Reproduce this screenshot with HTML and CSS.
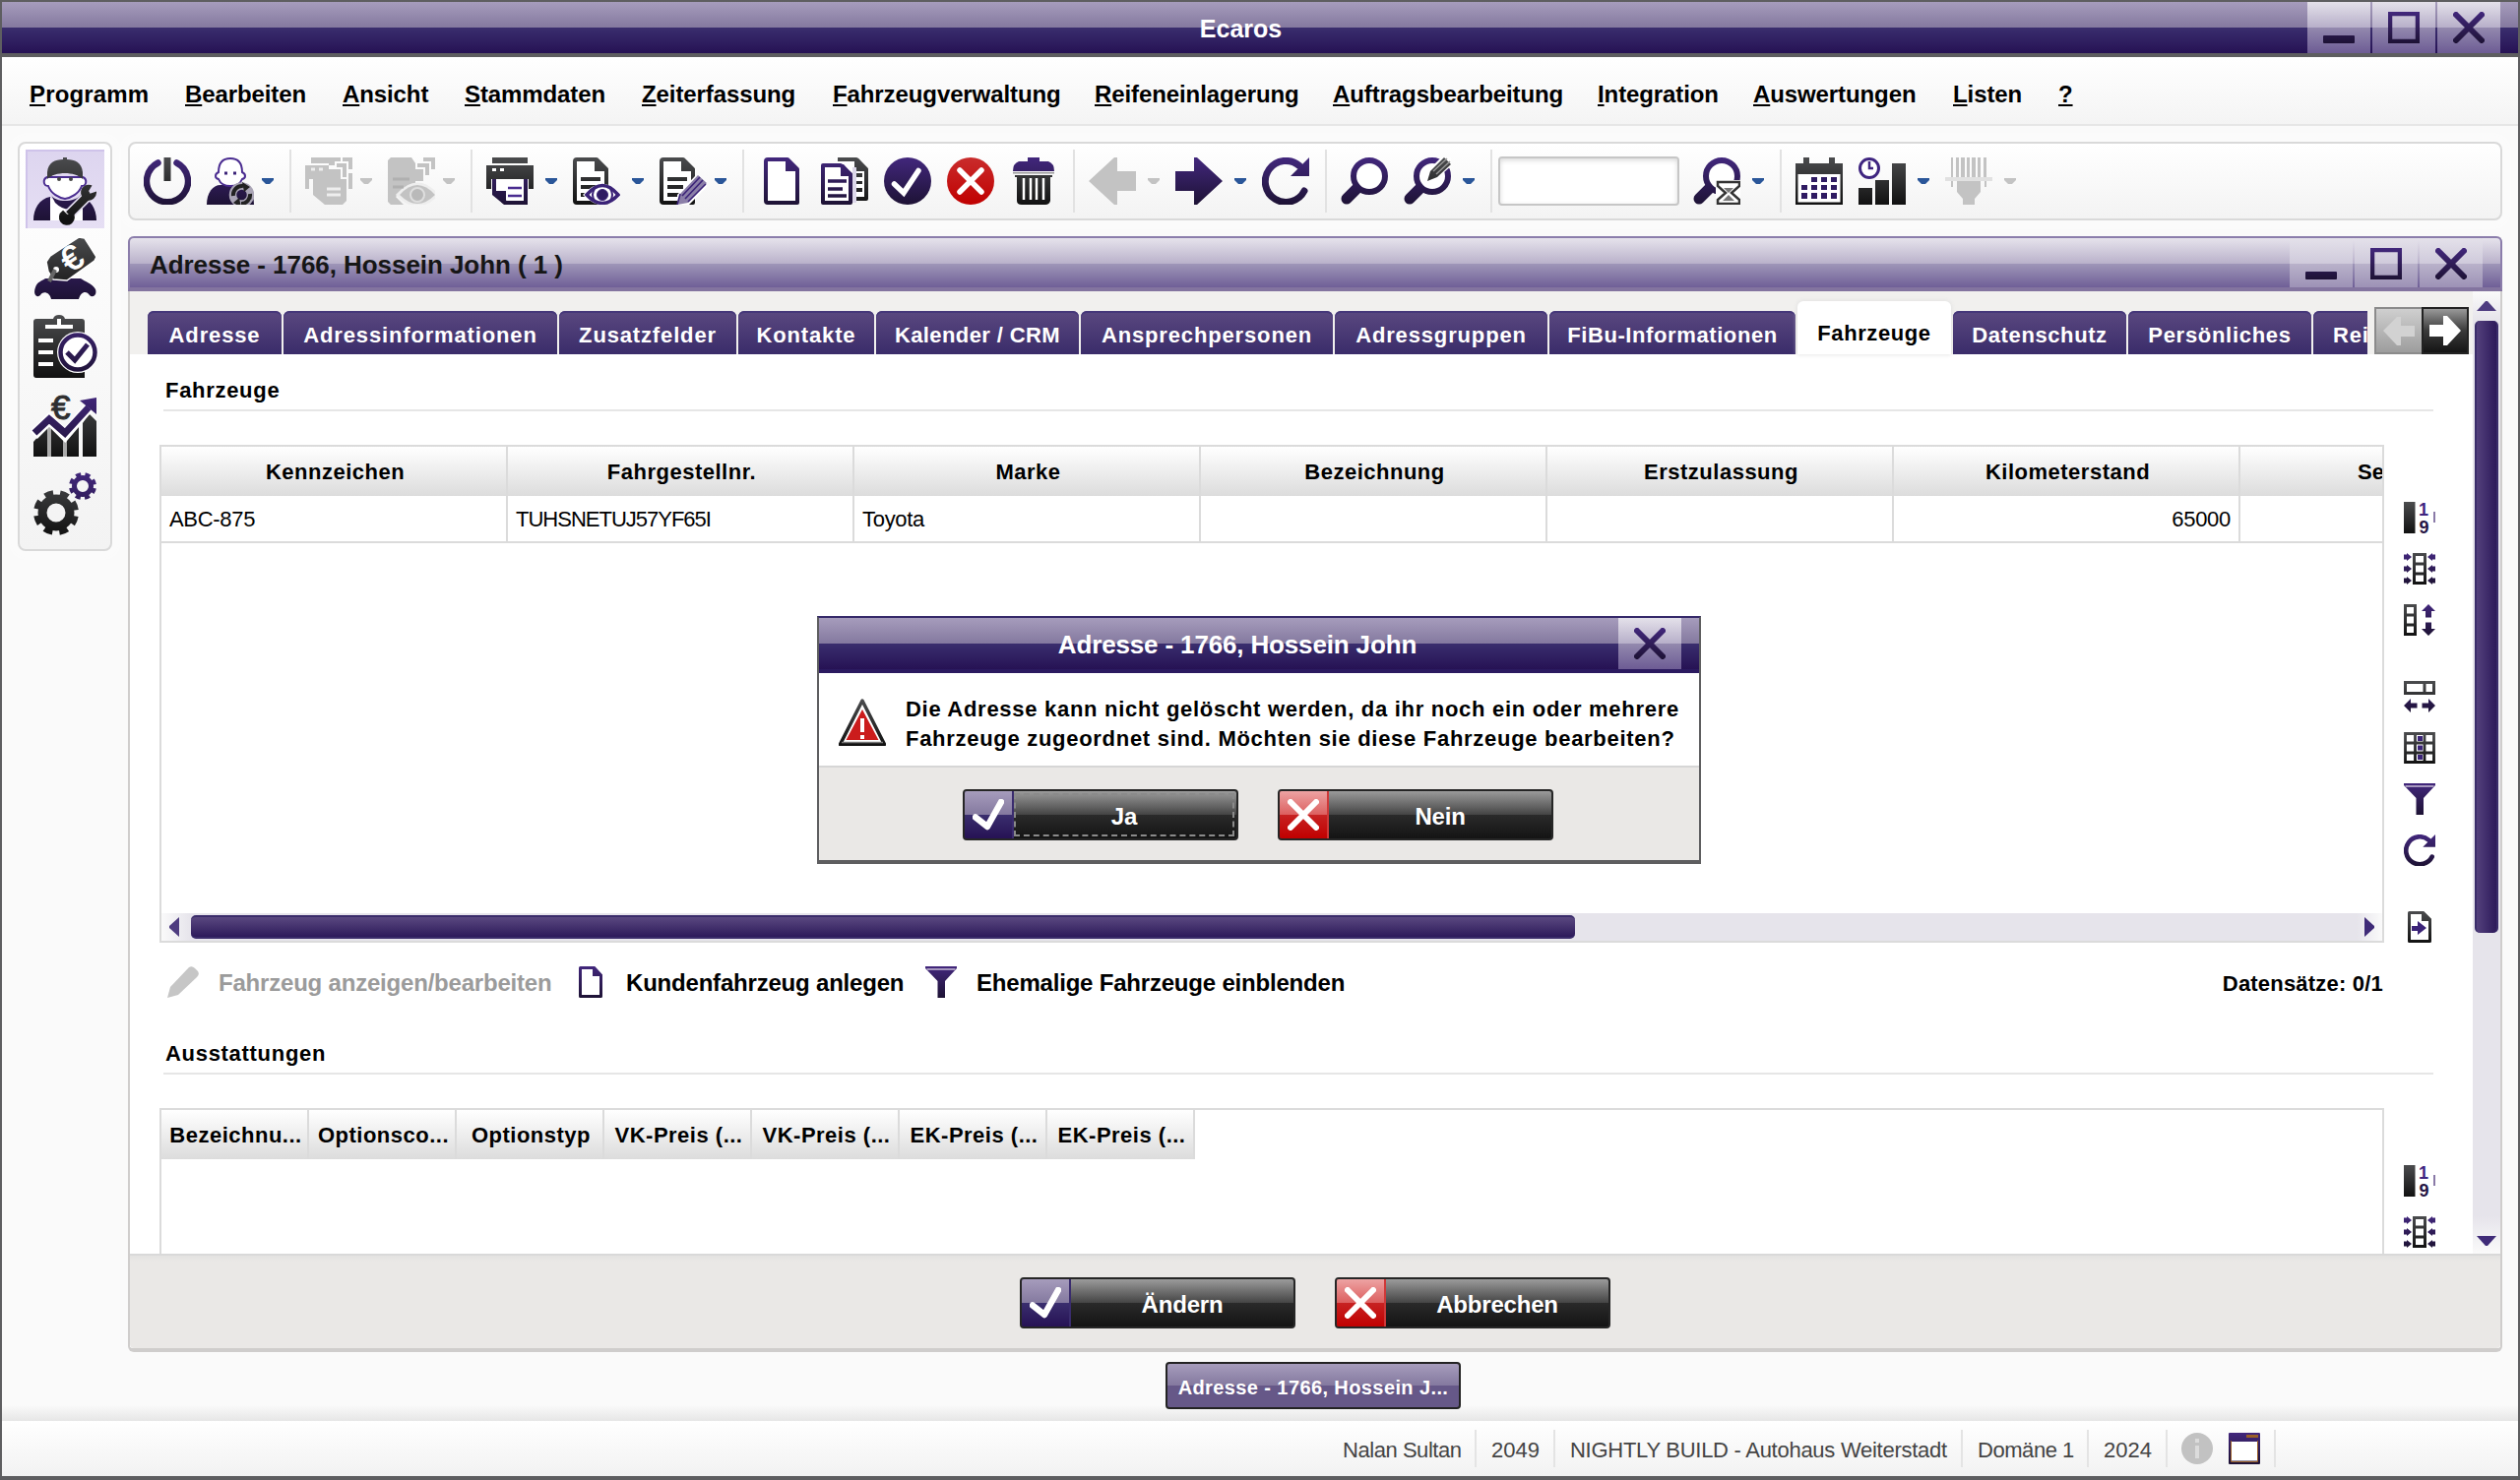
FILE: index.html
```html
<!DOCTYPE html>
<html lang="de">
<head>
<meta charset="utf-8">
<title>Ecaros</title>
<link rel="stylesheet" href="styles.css">
</head>
<body>
<svg class="defs" width="0" height="0">
  <defs>
    <linearGradient id="p48" gradientUnits="userSpaceOnUse" x1="0" y1="0" x2="0" y2="48"><stop offset="0" stop-color="#42277c"/><stop offset="1" stop-color="#1d1234"/></linearGradient>
    <linearGradient id="d48" gradientUnits="userSpaceOnUse" x1="0" y1="0" x2="0" y2="48"><stop offset="0" stop-color="#4b4c4e"/><stop offset="1" stop-color="#111"/></linearGradient>
    <linearGradient id="r48" gradientUnits="userSpaceOnUse" x1="0" y1="0" x2="0" y2="48"><stop offset="0" stop-color="#c92c2c"/><stop offset="1" stop-color="#c00000"/></linearGradient>
    <linearGradient id="p64" gradientUnits="userSpaceOnUse" x1="0" y1="0" x2="0" y2="64"><stop offset="0" stop-color="#42277c"/><stop offset="1" stop-color="#1d1234"/></linearGradient>
    <linearGradient id="d64" gradientUnits="userSpaceOnUse" x1="0" y1="0" x2="0" y2="64"><stop offset="0" stop-color="#4b4c4e"/><stop offset="1" stop-color="#111"/></linearGradient>
    <linearGradient id="p32" gradientUnits="userSpaceOnUse" x1="0" y1="0" x2="0" y2="32"><stop offset="0" stop-color="#42277c"/><stop offset="1" stop-color="#1d1234"/></linearGradient>
    <linearGradient id="d32" gradientUnits="userSpaceOnUse" x1="0" y1="0" x2="0" y2="32"><stop offset="0" stop-color="#4b4c4e"/><stop offset="1" stop-color="#111"/></linearGradient>
    <symbol id="i-min" viewBox="0 0 32 32"><rect x="0" y="24" width="32" height="8" rx="1" fill="url(#p32)"/></symbol>
    <symbol id="i-max" viewBox="0 0 32 32"><rect x="2" y="2" width="28" height="28" fill="none" stroke="url(#p32)" stroke-width="4.5"/></symbol>
    <symbol id="i-close" viewBox="0 0 32 32"><path d="M3 3 29 29M29 3 3 29" stroke="url(#p32)" stroke-width="6" stroke-linecap="round"/></symbol>
    <symbol id="i-check" viewBox="0 0 32 32"><path d="M3 18.500 15 28 29 3" fill="none" stroke="#fff" stroke-width="6.500" stroke-linecap="round" stroke-linejoin="round"/></symbol>
    <symbol id="i-x" viewBox="0 0 32 32"><path d="M3 3 29 29M29 3 3 29" stroke="#fff" stroke-width="6" stroke-linecap="round"/></symbol>
    <symbol id="i-drop" viewBox="0 0 12 6"><path d="M0 0H12V2L8 6H4L0 2Z" fill="currentColor"/></symbol>
    <symbol id="i-search" viewBox="0 0 48 48"><path d="M21 27 6 42" stroke="url(#p48)" stroke-width="11" stroke-linecap="round"/><circle cx="29" cy="19" r="16" fill="#fff" stroke="url(#p48)" stroke-width="6"/></symbol>
    <symbol id="i-refresh" viewBox="0 0 48 48"><path d="M43 34A21 21 0 1 1 38 8.500" fill="none" stroke="url(#p48)" stroke-width="7" stroke-linecap="round"/><path d="M48 0V19H29Z" fill="url(#p48)"/></symbol>
    <symbol id="i-num" viewBox="0 0 32 32"><rect width="11.500" height="32" fill="url(#d32)"/><text x="15" y="14" class="glyph">1</text><text x="15.500" y="31.500" class="glyph low">9</text><path d="M31 10V21" stroke="#8a7aa8" stroke-width="2"/></symbol>
    <symbol id="i-colfit" viewBox="0 0 32 32"><path d="M10.500 1.500H21.500V30.500H10.500ZM10.500 11H21.500M10.500 21H21.500" fill="#fff" stroke="url(#d32)" stroke-width="3"/><g fill="url(#p32)"><path d="M0 1.500H3V0L8 4 3 8V6.500H0ZM0 13.500H3V12L8 16 3 20V18.500H0ZM0 25.500H3V24L8 28 3 32V30.500H0ZM32 1.500H29V0L24 4 29 8V6.500H32ZM32 13.500H29V12L24 16 29 20V18.500H32ZM32 25.500H29V24L24 28 29 32V30.500H32Z"/></g></symbol>
    <symbol id="i-rowfit" viewBox="0 0 32 32"><path d="M1.500 1.500H11.500V30.500H1.500ZM1.500 11H11.500M1.500 21H11.500" fill="#fff" stroke="url(#d32)" stroke-width="3"/><path d="M25 0 32 7H28V13.500H22V7H18ZM25 32 32 25H28V18.500H22V25H18Z" fill="url(#p32)"/></symbol>
    <symbol id="i-colwidth" viewBox="0 0 32 32"><path d="M1.500 1.500H30.500V12.500H1.500ZM21 1.500V12.500" fill="#fff" stroke="url(#d32)" stroke-width="3"/><path d="M0 25 7 18V22.500H13.500V27.500H7V32ZM32 25 25 18V22.500H18.500V27.500H25V32Z" fill="url(#p32)"/></symbol>
    <symbol id="i-grid" viewBox="0 0 32 32"><path d="M1.500 1.500H30.500V30.500H1.500ZM11.500 1.500V30.500M21 1.500V30.500M1.500 11H30.500M1.500 21H30.500" fill="#fff" stroke="url(#d32)" stroke-width="2.800"/><path d="M14 4H19V9H14ZM14 13.500H19V18.500H14ZM14 23H19V28H14Z" fill="#3b2378"/></symbol>
    <symbol id="i-funnel" viewBox="0 0 32 32"><path d="M0 0H32V2L20 15V32H12.500V15L0 2Z" fill="url(#p32)"/><path d="M1.500 3H30.500" stroke="#a596be" stroke-width="2"/></symbol>
    <symbol id="i-export" viewBox="0 0 32 32"><path d="M5.500 1.500H19.500L26.500 8.500V30.500H5.500Z" fill="#fff" stroke="url(#d32)" stroke-width="3" stroke-linejoin="round"/><path d="M18 0H20L28 8V10H18Z" fill="url(#d32)"/><path d="M8 15H14V10L23 17 14 24V20H8Z" fill="#3b2378"/></symbol>
    <symbol id="i-doc" viewBox="0 0 48 48"><path d="M10 2H30L40 12V46H10A2 2 0 0 1 8 44V4A2 2 0 0 1 10 2Z" fill="#fff" stroke="url(#p48)" stroke-width="4" stroke-linejoin="round"/><path d="M28 1H31L41 12V14H28Z" fill="url(#p48)"/></symbol>
    <symbol id="i-textdoc" viewBox="0 0 48 48"><path d="M4 2H24L34 12V46H4A2 2 0 0 1 2 44V4A2 2 0 0 1 4 2Z" fill="#fff" stroke="url(#d48)" stroke-width="4" stroke-linejoin="round"/><path d="M22 1H25L36 12V14H22Z" fill="url(#d48)"/><path d="M8 22H28M8 30H24M8 38H20" stroke="url(#d48)" stroke-width="4"/></symbol>
  </defs>
</svg>

<div class="app">
  <header class="titlebar">
    <span class="app-name">Ecaros</span>
    <div class="win-buttons">
      <button><svg><use href="#i-min"/></svg></button>
      <button><svg><use href="#i-max"/></svg></button>
      <button><svg><use href="#i-close"/></svg></button>
    </div>
  </header>

  <nav class="menubar">
    <a><u>P</u>rogramm</a><a><u>B</u>earbeiten</a><a><u>A</u>nsicht</a><a><u>S</u>tammdaten</a><a><u>Z</u>eiterfassung</a><a><u>F</u>ahrzeugverwaltung</a><a><u>R</u>eifeneinlagerung</a><a><u>A</u>uftragsbearbeitung</a><a><u>I</u>ntegration</a><a><u>A</u>uswertungen</a><a><u>L</u>isten</a><a><u>?</u></a>
  </nav>

  <div class="main">
    <aside class="sidebar">
      <div class="side-item active">
        <svg viewBox="0 0 64 64">
          <path d="M0 64C0 52 6 42 17 40L22 44 32 48 42 44 47 40C58 42 64 52 64 64Z" fill="url(#p64)"/>
          <path d="M17 40V64H50V42L42 48 30 50Z" fill="#fff"/>
          <path d="M18 38C22 46 42 46 48 38L50 48Q34 58 22 46Z" fill="url(#p64)"/>
          <path d="M14 20C9 22 10 29 15 29C18 37 26 41 32 42C38 41 46 37 49 29C54 29 55 22 50 20Z" fill="#fff" stroke="#4a2c90" stroke-width="2"/>
          <path d="M14 22V15C15 5 22 2 30 2V0H34V2C42 2 49 5 50 15V22C42 14 22 14 14 22Z" fill="url(#d64)"/>
          <circle cx="26" cy="22" r="2" fill="#444"/><circle cx="38" cy="22" r="2" fill="#444"/>
          <g fill="none" stroke="#e6e0f2" stroke-width="11"><path d="M36 58 56 38"/></g>
          <path d="M36 58 56 38" stroke="url(#d64)" stroke-width="8"/>
          <path d="M58 29A7 7 0 1 0 63 36L57 38 55 34ZM39 56A7 7 0 1 1 30 55L34 59 38 58Z" fill="url(#d64)" stroke="url(#d64)" stroke-width="2"/>
        </svg>
      </div>
      <div class="side-item">
        <svg viewBox="0 0 64 64">
          <path d="M2 52C4 46 8 46 12 43H48C52 46 60 48 63 54C65 60 60 63 57 60C54 55 48 56 46 64H18C16 56 9 56 7 60C4 63-1 60 2 52Z" fill="url(#p64)"/>
          <path d="M13 26 17 20 46 1 52 2 64 21 62 25 34 45 20 44 15 36Z" fill="url(#d64)" stroke="#fff" stroke-width="1.500"/>
          <circle cx="23" cy="34" r="3" fill="#fff"/><path d="M22 34 16 46" stroke="#666" stroke-width="4"/>
          <text x="30" y="34" class="euro light" transform="rotate(-33 40 24)">€</text>
        </svg>
      </div>
      <div class="side-item">
        <svg viewBox="0 0 64 64">
          <path d="M3 4H20Q21 0 26 0T32 4H49Q52 4 52 7V64H3Q0 64 0 61V7Q0 4 3 4Z" fill="url(#d64)"/>
          <path d="M12 12H40M26 4V12" stroke="#fff" stroke-width="4"/><path d="M5 26H20M5 38H20M5 50H20" stroke="#fff" stroke-width="4"/>
          <circle cx="45" cy="38" r="21" fill="#fff"/><circle cx="45" cy="38" r="17.500" fill="#fff" stroke="url(#p64)" stroke-width="4.500"/>
          <path d="M34 38 42 46 55 30" fill="none" stroke="url(#p64)" stroke-width="5"/>
        </svg>
      </div>
      <div class="side-item">
        <svg viewBox="0 0 64 64">
          <path d="M0 49 14 33V64H0ZM18 33 30 46V64H18ZM34 46 46 32V64H34ZM50 30 56 20 64 28V64H50Z" fill="url(#d64)"/>
          <path d="M14 33 18 33V64H14ZM30 46H34V64H30Z" fill="#aaa"/>
          <path d="M0 42 16 26 32 42 56 14" fill="none" stroke="#fff" stroke-width="11"/>
          <path d="M1 40 16 26 32 40 56 14" fill="none" stroke="url(#p64)" stroke-width="7"/>
          <path d="M64 4V21L47 7Z" fill="url(#p64)"/>
          <text x="18" y="26" class="euro">€</text>
        </svg>
      </div>
      <div class="side-item">
        <svg viewBox="0 0 64 64">
          <circle cx="23" cy="41" r="14" fill="none" stroke="url(#d64)" stroke-width="9"/>
          <circle cx="23" cy="41" r="20" fill="none" stroke="url(#d64)" stroke-width="6" stroke-dasharray="8.700 7.008" transform="rotate(10 23 41)"/>
          <circle cx="50" cy="14" r="8.500" fill="none" stroke="url(#p64)" stroke-width="5"/>
          <circle cx="50" cy="14" r="12" fill="none" stroke="url(#p64)" stroke-width="4" stroke-dasharray="5.200 4.225" transform="rotate(10 50 14)"/>
        </svg>
      </div>
    </aside>

    <div class="workspace">
      <div class="toolbar">
        <svg class="tool" viewBox="0 0 48 48"><path d="M14.500 5.500A21 21 0 1 0 33.500 5.500" fill="none" stroke="url(#p48)" stroke-width="6.500" stroke-linecap="round"/><rect x="20.500" width="7" height="24" fill="url(#d48)"/></svg>
        <svg class="tool" viewBox="0 0 48 48"><path d="M0 48C0 36 6 28 14 28H36C44 32 48 38 48 48Z" fill="url(#p48)"/><path d="M24 1C16 1 12 6 12 15C8 17 8 21 12 22C14 27 19 29 24 29S34 27 36 22C40 21 40 17 36 15C36 6 32 1 24 1Z" fill="#fff" stroke="#4a2c90" stroke-width="2"/><path d="M18 16H21M27 16H30" stroke="#3b2378" stroke-width="3"/><circle cx="35.500" cy="38" r="9" fill="none" stroke="#aaa5b6" stroke-width="7.500"/><path d="M27 39A9 9 0 0 1 37 29M44 37A9 9 0 0 1 35 47" fill="none" stroke="#222" stroke-width="4"/><path d="M36 25 44 30 38 35ZM35 51 27 46 33 41Z" fill="#222"/></svg>
        <svg class="drop near"><use href="#i-drop"/></svg>
        <i class="sep"></i>
        <svg class="tool off" viewBox="0 0 48 48"><path d="M0 8H24V22H42V44L38 48H20L8 38V22H4V32H0Z"/><path d="M6 0H36V4H30V8H24V6H6ZM38 0H48V12H44V4H38ZM32 6H42V20H38V10H32ZM24 12H36V24H24ZM44 16H48V32H44Z"/><path class="cut" d="M6 12H10M14 12H18M22 32H36M22 38H36"/></svg>
        <svg class="drop near off"><use href="#i-drop"/></svg>
        <svg class="tool off" viewBox="0 0 48 48"><path d="M3 0H24L28 6V26L16 32 8 40 16 48H3L0 45V3Z"/><path d="M36 0H48V12H44V4H36ZM30 6H42V18H38V10H30ZM24 12H36V24H24Z"/><path class="cut" d="M10 38Q30 16 50 38Q30 58 10 38Z"/><path d="M12 38Q30 18 48 38Q30 56 12 38Z"/><circle class="ring" cx="30" cy="38" r="7"/><path class="cut thin" d="M5 22H22M5 30H16"/></svg>
        <svg class="drop near off"><use href="#i-drop"/></svg>
        <i class="sep"></i>
        <svg class="tool" viewBox="0 0 48 48"><path d="M6 0H42V6H6ZM0 8H48V32H43V22H5V32H0Z" fill="url(#d48)"/><path d="M6 11H10V14H6ZM14 11H18V14H14Z" fill="#fff"/><path d="M8 22V36L20 46H40V22" fill="#fff" stroke="url(#p48)" stroke-width="4"/><path d="M6 34H20V48H18L6 38Z" fill="url(#p48)"/><path d="M22 31H36M22 39H36" stroke="#4a2c90" stroke-width="2.500"/></svg>
        <svg class="drop"><use href="#i-drop"/></svg>
        <svg class="tool" viewBox="0 0 48 48"><use href="#i-textdoc"/><path d="M10 38Q30 16 50 38Q30 58 10 38Z" fill="#fff"/><path d="M14 38Q30 19 46 38Q30 55 14 38Z" fill="#fff" stroke="#3b2378" stroke-width="3.500"/><circle cx="30" cy="38" r="5.500" fill="#2f1b62" stroke="#3b2378" stroke-width="1"/><path d="M22 32Q18 38 22 44M38 32Q42 38 38 44" fill="none" stroke="#3b2378" stroke-width="2"/></svg>
        <svg class="drop"><use href="#i-drop"/></svg>
        <svg class="tool" viewBox="0 0 48 48"><use href="#i-textdoc"/><path d="M18 48V38L36 19 48 24V30L30 48Z" fill="#fff"/><path d="M18 48 21 37 39 18 48 26 29 46Z" fill="#8b7fa8"/><path d="M23 39 41 20M26 42 44 23M29 45 47 27M18 48 21 37" stroke="#3b2378" stroke-width="1.600"/></svg>
        <svg class="drop near"><use href="#i-drop"/></svg>
        <i class="sep"></i>
        <svg class="tool"><use href="#i-doc"/></svg>
        <svg class="tool" viewBox="0 0 48 48"><path d="M17 2H36L46 12V42H20" fill="#fff" stroke="url(#d48)" stroke-width="4" stroke-linejoin="round"/><path d="M34 1H38L48 12V14H34ZM34 16H42V20H34ZM34 24H42V27H34ZM34 31H42V35H34Z" fill="url(#d48)"/><path d="M34 10V46" stroke="#ddd8ea" stroke-width="4"/><path d="M2 8H20L30 17V46H2Z" fill="#fff" stroke="url(#p48)" stroke-width="4" stroke-linejoin="round"/><path d="M20 7H23L32 17V19H20Z" fill="url(#p48)"/><path d="M7 24H26M7 32H22M7 39H26" stroke="url(#p48)" stroke-width="3.500"/></svg>
        <svg class="tool" viewBox="0 0 48 48"><circle cx="24" cy="24" r="24" fill="url(#p48)"/><path d="M10.500 27 20 36 35 13.500" fill="none" stroke="#fff" stroke-width="5.500" stroke-linecap="round"/></svg>
        <svg class="tool" viewBox="0 0 48 48"><circle cx="24" cy="24" r="24" fill="url(#r48)"/><path d="M13 13 35 35M35 13 13 35" stroke="#fff" stroke-width="5.500" stroke-linecap="round"/></svg>
        <svg class="tool" viewBox="0 0 48 48"><path d="M18 4V0H30V4H39Q45 6 45 14H3Q3 6 9 4Z" fill="url(#p48)"/><path d="M5 18H43V20H41V44Q40 48 36 48H12Q7 48 7 44V20H5Z" fill="url(#d48)"/><path d="M14 21V43M21 21V43M27 21V43M34 21V43" stroke="#fff" stroke-width="2.500"/><path d="M3 15H45V16.500H3Z" fill="#999"/></svg>
        <i class="sep"></i>
        <svg class="tool off" viewBox="0 0 48 48"><path d="M0 24 26 0H29V14H48V34H29V48H26Z"/></svg>
        <svg class="drop off"><use href="#i-drop"/></svg>
        <svg class="tool" viewBox="0 0 48 48"><path d="M48 24 22 0H19V14H0V34H19V48H22Z" fill="url(#p48)"/></svg>
        <svg class="drop"><use href="#i-drop"/></svg>
        <svg class="tool"><use href="#i-refresh"/></svg>
        <i class="sep"></i>
        <svg class="tool"><use href="#i-search"/></svg>
        <svg class="tool" viewBox="0 0 48 48"><use href="#i-search"/><path d="M22 27 25 13 38 0H48V9L34 21Z" fill="#fff"/><path d="M24 24 27 14 41 0 48 7 34 20Z" fill="url(#d48)"/><path d="M30 14 44 1M33 17 47 4" stroke="#999" stroke-width="1.500"/></svg>
        <svg class="drop"><use href="#i-drop"/></svg>
        <i class="sep"></i>
        <input class="search" type="text">
        <svg class="tool after-input" viewBox="0 0 48 48"><use href="#i-search"/><path d="M23 23H48V48H23Z" fill="#fff"/><path d="M25 25H47V29L39 36 47 43V47H25V43L33 36 25 29Z" fill="#fff" stroke="#333" stroke-width="2.500"/><path d="M31 31H41L36 36ZM36 38 42 44H30Z" fill="#777"/></svg>
        <svg class="drop"><use href="#i-drop"/></svg>
        <i class="sep"></i>
        <svg class="tool" viewBox="0 0 48 48"><path d="M0 6H8V0H14V6H34V0H40V6H48V48H0Z" fill="url(#d48)"/><path d="M2.500 17H45.500V45.500H2.500Z" fill="#fff"/><path d="M16 20H22V25H16ZM26 20H32V25H26ZM36 20H42V25H36ZM6 28H12V33H6ZM16 28H22V33H16ZM26 28H32V33H26ZM36 28H42V33H36ZM6 36H12V42H6ZM16 36H22V42H16ZM26 36H32V42H26ZM36 36H42V42H36Z" fill="#2f1b62"/></svg>
        <svg class="tool" viewBox="0 0 48 48"><path d="M0 31H14V48H0ZM17 23H31V48H17ZM34 6H48V48H34Z" fill="url(#d48)"/><circle cx="11" cy="11" r="9.500" fill="#fff" stroke="#3f2580" stroke-width="3"/><path d="M11 4V11H15" fill="none" stroke="#3f2580" stroke-width="2.500"/></svg>
        <svg class="drop"><use href="#i-drop"/></svg>
        <svg class="tool off" viewBox="0 0 48 48"><path d="M6 0H8V20H6ZM11 0H14V20H11ZM16 0H20V20H16ZM22 0H25V20H22ZM27 0H31V20H27ZM33 0H36V20H33ZM39 0H42V20H39ZM6 24H8V30H6ZM40 24H42V30H40ZM12 24H36V35L30 42V48H18V42L12 35Z"/><path d="M0 20H48V24H0Z" opacity=".45"/></svg>
        <svg class="drop off"><use href="#i-drop"/></svg>
      </div>

      <section class="window">
        <div class="window-title">
          <h1>Adresse - 1766, Hossein John ( 1 )</h1>
          <div class="win-buttons">
            <button><svg><use href="#i-min"/></svg></button>
            <button><svg><use href="#i-max"/></svg></button>
            <button><svg><use href="#i-close"/></svg></button>
          </div>
        </div>
        <div class="window-body">
          <div class="pane">
            <div class="tabs">
              <span class="tab t1">Adresse</span><span class="tab t2">Adressinformationen</span><span class="tab t3">Zusatzfelder</span><span class="tab t4">Kontakte</span><span class="tab t5">Kalender / CRM</span><span class="tab t6">Ansprechpersonen</span><span class="tab t7">Adressgruppen</span><span class="tab t8">FiBu-Informationen</span><span class="tab current">Fahrzeuge</span><span class="tab t10">Datenschutz</span><span class="tab t11">Persönliches</span><span class="tab cut">Rei</span>
              <div class="tab-nav">
                <button class="prev"><svg viewBox="0 0 32 32"><path d="M0 16 14 2H18V11H32V22H18V31H14Z" fill="#d2d2d2"/></svg></button>
                <button class="next"><svg viewBox="0 0 32 32"><path d="M32 16 18 1H14V10H0V22H14V31H18Z" fill="#fff"/></svg></button>
              </div>
            </div>

            <h2 class="heading">Fahrzeuge</h2>
            <div class="block">
              <div class="grid vehicles">
                <div class="row head"><span>Kennzeichen</span><span>Fahrgestellnr.</span><span>Marke</span><span>Bezeichnung</span><span>Erstzulassung</span><span>Kilometerstand</span><span class="partial">Se</span></div>
                <div class="row data"><span>ABC-875</span><span class="vin">TUHSNETUJ57YF65I</span><span>Toyota</span><span></span><span></span><span class="num">65000</span><span></span></div>
                <div class="empty"></div>
                <div class="hscroll">
                  <svg viewBox="0 0 10 20"><path d="M10 0V20L0 11V9Z" fill="#4e3c80"/></svg>
                  <div class="track"><div class="thumb"></div></div>
                  <svg viewBox="0 0 10 20"><path d="M0 0V20L10 11V9Z" fill="#3f2b78"/></svg>
                </div>
              </div>
              <div class="grid-tools">
                <svg><use href="#i-num"/></svg><svg><use href="#i-colfit"/></svg><svg><use href="#i-rowfit"/></svg>
                <svg class="group"><use href="#i-colwidth"/></svg><svg><use href="#i-grid"/></svg><svg><use href="#i-funnel"/></svg><svg><use href="#i-refresh"/></svg>
                <svg class="group"><use href="#i-export"/></svg>
              </div>
            </div>

            <div class="actions">
              <a class="disabled"><svg viewBox="0 0 32 32"><path d="M0 32 3 21 22 1Q25-1 28 2L31 5Q33 8 30 11L11 29Z" fill="#c6c6c6"/></svg><span>Fahrzeug anzeigen/bearbeiten</span></a>
              <a class="create"><svg viewBox="0 0 32 32"><path d="M5.500 1.500H19.500L26.500 9V30.500H5.500Z" fill="#fff" stroke="url(#p32)" stroke-width="3" stroke-linejoin="round"/><path d="M18 0H20L28 9V10H18Z" fill="url(#p32)"/></svg><span>Kundenfahrzeug anlegen</span></a>
              <a class="former"><svg><use href="#i-funnel"/></svg><span>Ehemalige Fahrzeuge einblenden</span></a>
              <span class="count">Datensätze: 0/1</span>
            </div>

            <h2 class="heading second">Ausstattungen</h2>
            <div class="block">
              <div class="grid options">
                <div class="row head"><span>Bezeichnu...</span><span>Optionsco...</span><span>Optionstyp</span><span>VK-Preis (...</span><span>VK-Preis (...</span><span>EK-Preis (...</span><span>EK-Preis (...</span></div>
              </div>
              <div class="grid-tools"><svg><use href="#i-num"/></svg><svg><use href="#i-colfit"/></svg></div>
            </div>
          </div>
          <div class="vscroll">
            <svg viewBox="0 0 20 10"><path d="M0 10H20L11 0H9Z" fill="#4e3c80"/></svg>
            <div class="vtrack"><div class="thumb"></div></div>
            <svg viewBox="0 0 20 10"><path d="M0 0H20L11 10H9Z" fill="#3f2b78"/></svg>
          </div>
        </div>
        <footer class="window-footer">
          <button class="push"><i><svg><use href="#i-check"/></svg></i><span>Ändern</span></button>
          <button class="push red"><i><svg><use href="#i-x"/></svg></i><span>Abbrechen</span></button>
        </footer>
      </section>
    </div>
  </div>

  <div class="taskbar"><button class="task">Adresse - 1766, Hossein J...</button></div>

  <footer class="status">
    <span class="s-user">Nalan Sultan</span><span class="s-id">2049</span><span class="s-build">NIGHTLY BUILD - Autohaus Weiterstadt</span><span class="s-domain">Domäne 1</span><span class="s-year">2024</span>
    <span class="s-icons">
      <svg viewBox="0 0 32 32"><circle cx="16" cy="16" r="16" fill="#c2c2c2"/><path d="M16 6V10M16 13V26" stroke="#dcdcdc" stroke-width="4"/></svg>
      <svg viewBox="0 0 32 32"><rect width="32" height="32" rx="1" fill="url(#p32)"/><path d="M3 9H29V28.500H3Z" fill="#fff"/><path d="M18 2H30V5H18Z" fill="#9a5f28"/><path d="M2.500 8V29.500H29.500V8" fill="none" stroke="#9a5f28"/></svg>
    </span>
  </footer>

  <div class="dialog" role="dialog">
    <div class="dialog-title"><span>Adresse - 1766, Hossein John</span><button><svg><use href="#i-close"/></svg></button></div>
    <div class="dialog-body">
      <svg viewBox="0 0 48 48"><path d="M24 2 46.500 46.500H1.500Z" fill="#fff" stroke="url(#d48)" stroke-width="3.500" stroke-linejoin="round"/><path d="M24 11 40.500 42H7.500Z" fill="#cb1c1c"/><path d="M24 20V34M24 37V41" stroke="#fff" stroke-width="4"/><path d="M3 44.500H45" stroke="#777" stroke-width="1.500"/></svg>
      <p>Die Adresse kann nicht gelöscht werden, da ihr noch ein oder mehrere<br>Fahrzeuge zugeordnet sind. Möchten sie diese Fahrzeuge bearbeiten?</p>
    </div>
    <div class="dialog-footer">
      <button class="push focus"><i><svg><use href="#i-check"/></svg></i><span>Ja</span></button>
      <button class="push red"><i><svg><use href="#i-x"/></svg></i><span>Nein</span></button>
    </div>
  </div>
</div>
</body>
</html>
```
FILE: styles.css
```css
* { box-sizing: border-box; }
body { margin: 0; font-family: "Liberation Sans", Arial, sans-serif; font-size: 24px; font-weight: bold; color: #000; }
button { border: 0; padding: 0; margin: 0; background: none; font: inherit; color: inherit; display: block; }
svg { display: block; flex: none; }
.defs { position: absolute; }
.glyph { font: bold 18px "Liberation Sans", sans-serif; fill: #3f2580; }
.glyph.low { fill: #241544; }
.euro { font: 35px "Liberation Sans", sans-serif; fill: #2f2f30; stroke: #2f2f30; stroke-width: 1px; }
.euro.light { fill: #fff; stroke: #fff; }

.app { position: relative; width: 2560px; height: 1504px; display: flex; flex-direction: column; background: #fafafa; border: solid #5e5e60; border-width: 2px 2px 4px; overflow: hidden; }

/* title bar */
.titlebar { height: 56px; flex: none; display: flex; align-items: stretch; border-bottom: 4px solid #5e5e60; background: linear-gradient(#a69cbc, #84799f 26px, #3a2e6e 26px, #261254); padding-right: 18px; }
.app-name { flex: 1; padding-left: 175px; text-align: center; color: #fff; line-height: 54px; font-size: 25px; }
.win-buttons { display: flex; gap: 2px; }
.win-buttons button { width: 64px; display: flex; justify-content: center; padding-top: 10px; background: linear-gradient(#e4e1ea, #b7afc9 26px, #9389ae 26px, #6d5c94); }
.win-buttons svg, .dialog-title svg { width: 32px; height: 32px; }

/* menu */
.menubar { height: 70px; flex: none; display: grid; grid-template-columns: 158px 160px 124px 180px 194px 266px 242px 269px 158px 203px 107px auto; padding: 7px 0 0 28px; line-height: 62px; letter-spacing: -.1px; background: linear-gradient(#fff, #f4f4f4); border-bottom: 2px solid #e6e6e6; }
.menubar u { text-decoration-thickness: 2px; text-underline-offset: 2px; text-decoration-skip-ink: none; }
.menubar a:first-child { letter-spacing: .15px; }

.main { display: flex; height: 1246px; flex: none; padding: 16px 16px 0; gap: 16px; }
.sidebar { width: 96px; height: 416px; flex: none; padding: 6px; border: 2px solid #d9d9d9; border-radius: 8px; background: linear-gradient(#fff, #f3f3f3); box-shadow: 0 0 12px 4px #fff, 0 0 10px rgba(0, 0, 0, .07); }
.side-item { width: 80px; height: 80px; display: flex; align-items: center; justify-content: center; }
.side-item.active { background: linear-gradient(#ddd5ef, #e6dff4); border: solid #cfc3ea; border-width: 2px 0 0 2px; padding: 0 2px 2px 0; }
.side-item svg { width: 64px; height: 64px; overflow: visible; }

.workspace { flex: 1; min-width: 0; display: flex; flex-direction: column; gap: 16px; }
.toolbar { height: 80px; flex: none; display: flex; align-items: center; border: 2px solid #d9d9d9; border-radius: 8px; background: linear-gradient(#fff, #f3f3f3); box-shadow: 0 0 12px 4px #fff, 0 0 10px rgba(0, 0, 0, .07); }
.tool { width: 48px; height: 48px; margin-left: 16px; }
.tool:first-child, .sep + .tool, .tool.after-input { margin-left: 14px; }
.tool.off { fill: #c3c3c3; }
.off .cut { stroke: #eee; fill: none; stroke-width: 3; }
.off .thin { stroke: #b0b0b0; }
.off .ring { fill: #b9b9b9; stroke: #dedede; stroke-width: 2; }
.drop { width: 12px; height: 6px; margin-left: 12px; color: #2a5699; }
.drop.near { margin-left: 8px; }
.drop.off { color: #c3c3c3; }
.sep { width: 2px; height: 64px; margin-left: 16px; background: #e2e2e2; }
.search { width: 184px; height: 50px; margin: 0 0 0 6px; border: 2px solid #c6c6c6; border-radius: 4px; background: #fff; box-shadow: inset 0 2px 5px rgba(0, 0, 0, .15); }

/* document window */
.window { width: 2412px; height: 1134px; display: flex; flex-direction: column; border: 2px solid #cfcdcc; border-top: 0; border-bottom-width: 4px; border-radius: 6px; background: #fff; }
.window-title { height: 56px; flex: none; margin: 0 -2px; display: flex; border: 2px solid #8b7dab; border-bottom: 4px solid #83749f; border-radius: 6px 6px 0 0; background: linear-gradient(#e6e3ec, #b9b1ca 26px, #9f96b8 26px, #6f5f97); padding-right: 18px; }
.window-title h1 { flex: 1; margin: 0; padding: 2px 0 0 20px; font-size: 26px; line-height: 50px; letter-spacing: -.06px; color: #161616; }
.window-title button { padding-top: 10px; background: linear-gradient(#e4e1ea, #cfcadb 26px, #b9b2ca 26px, #9d92b6); }
.window-body { flex: 1; min-height: 0; display: flex; }
.pane { flex: 1; min-width: 0; overflow: hidden; }
.tabs { height: 64px; display: flex; align-items: flex-end; background: #f1f0ee; padding-left: 18px; }
.tab { height: 44px; flex: none; margin-right: 2px; padding-top: 5px; line-height: 40px; text-align: center; font-size: 22px; letter-spacing: .85px; color: #fff; border-radius: 6px 6px 0 0; background: linear-gradient(#5a4880, #3a2c6a); box-shadow: inset 0 2px #45377a; white-space: nowrap; }
.t1 { width: 136px; } .t2 { width: 278px; } .t3 { width: 180px; } .t4 { width: 138px; } .t5 { width: 206px; letter-spacing: .4px; }
.t6 { width: 256px; } .t7 { width: 216px; } .t8 { width: 250px; letter-spacing: .6px; } .t10 { width: 176px; letter-spacing: .6px; } .t11 { width: 186px; letter-spacing: .7px; }
.tab.current { width: 156px; height: 54px; padding-top: 12px; line-height: 42px; color: #000; background: #fff; letter-spacing: .6px; box-shadow: 0 0 5px #ddd; }
.tab.cut { width: 55px; margin-right: 0; padding-left: 20px; text-align: left; overflow: hidden; border-radius: 6px 0 0; }
.tab-nav { margin-left: auto; margin-right: 4px; display: flex; }
.tab-nav button { width: 48px; height: 48px; display: grid; place-items: center; border: 2px solid #8b8b8b; }
.tab-nav svg { width: 32px; height: 32px; }
.tab-nav .prev { background: linear-gradient(#cfcfcf, #9d9d9d); border-right: 0; }
.tab-nav .next { background: linear-gradient(#999, #3a3a3a 50%, #151515); border-color: #222; }

.heading { height: 58px; margin: 0 40px 0 34px; padding-top: 17px; border-bottom: 2px solid #e6e6e6; font-size: 22px; line-height: 40px; letter-spacing: .7px; padding-left: 2px; }
.block { display: flex; padding-left: 30px; margin-top: 34px; }
.grid { width: 2260px; flex: none; border: 2px solid #dbdbdb; overflow: hidden; font-size: 22px; }
.row { display: flex; }
.row span { flex: none; border-right: 2px solid #dbdbdb; white-space: nowrap; }
.head { letter-spacing: .5px; }
.head span { height: 50px; padding-left: 3px; line-height: 52px; text-align: center; background: linear-gradient(#fff, #dcdcdc); }
.head .partial { padding-left: 119px; text-align: left; letter-spacing: 0; }
.vehicles { height: 506px; display: flex; flex-direction: column; }
.vehicles .row span { width: 352px; }
.data { border-bottom: 2px solid #dbdbdb; font-weight: normal; letter-spacing: -.3px; }
.data span { height: 46px; line-height: 48px; padding: 0 8px; }
.data .vin { letter-spacing: -1px; }
.num { text-align: right; }
.empty { flex: 1; }
.hscroll { height: 28px; display: flex; align-items: center; padding: 0 8px 0 8px; background: linear-gradient(90deg, #fafafa, #e6e4eb 30px, #e6e4eb 2230px, #fafafa); }
.hscroll svg { width: 10px; height: 20px; }
.track { flex: 1; padding-left: 12px; }
.track .thumb { width: 1406px; height: 24px; border-radius: 5px; background: linear-gradient(#5a4880, #2d1a5a); border: 2px solid #3a2c6a; border-width: 2px 0; }
.grid-tools { margin-left: 20px; padding-top: 58px; display: flex; flex-direction: column; gap: 20px; }
.grid-tools svg { width: 32px; height: 32px; overflow: visible; }
.grid-tools .group { margin-top: 26px; }

.actions { height: 80px; display: flex; align-items: center; padding-left: 38px; letter-spacing: -.2px; }
.actions a { display: flex; align-items: center; }
.actions span { padding-top: 2px; }
.actions svg { width: 32px; height: 32px; margin-right: 20px; }
.actions .disabled { width: 414px; color: #9b9b9b; }
.actions .create { width: 356px; }
.actions .count { margin-left: auto; margin-right: 91px; padding-top: 4px; font-size: 22px; letter-spacing: .2px; }
.heading.second { height: 54px; padding-top: 14px; line-height: 38px; }
.options { height: 200px; }
.options .row span { width: 150px; }

.vscroll { width: 28px; flex: none; display: flex; flex-direction: column; align-items: center; padding: 10px 0 8px; background: linear-gradient(#fafafa, #e6e4eb 30px, #e6e4eb 940px, #fafafa); }
.vscroll svg { width: 20px; height: 10px; }
.vtrack { flex: 1; padding-top: 10px; }
.vtrack .thumb { width: 24px; height: 622px; border-radius: 5px; background: linear-gradient(90deg, #53407c, #2d1a5a); border: 2px solid #3a2c6a; border-width: 0 2px; }

.window-footer { height: 96px; flex: none; display: flex; gap: 40px; padding: 22px 0 0 904px; border-top: 2px solid #d9d9d9; background: linear-gradient(#e3e2e1, #eae8e6 6px); border-radius: 0 0 4px 4px; }
.push { width: 280px; height: 52px; display: flex; position: relative; border: 2px solid #262626; border-radius: 4px; background: linear-gradient(#9b9b9b, #444 24px, #2a2a2a 24px, #141414); color: #fff; overflow: hidden; }
.push i { width: 52px; height: 52px; margin: -2px 0 0 -2px; flex: none; display: grid; place-items: center; border: 2px solid #3a2c6e; border-radius: 4px 0 0 4px; background: linear-gradient(#a69cbc, #84799f 24px, #3a2e6e 24px, #261254); }
.push.red i { border-color: #cf3838; background: linear-gradient(#eda3a3, #dc5f5f 24px, #c72222 24px, #c00000); }
.push svg { width: 32px; height: 32px; }
.push span { flex: 1; text-align: center; line-height: 51px; letter-spacing: -.2px; }
.push.focus span { margin: 2px 2px 2px 0; line-height: 44px; border: 2px dashed #8a8a8a; }

/* task bar and status bar */
.taskbar { height: 70px; flex: none; padding: 10px 0 0 1182px; background: linear-gradient(#fafafa 54px, #e6e6e6); }
.task { width: 300px; height: 48px; border: 2px solid #232323; border-radius: 4px; color: #fff; font-size: 20px; letter-spacing: .4px; line-height: 48px; white-space: nowrap; background: linear-gradient(#a69cbc, #84799f 22px, #665888 22px); }
.status { flex: 1; display: flex; align-items: center; padding-left: 1362px; font-size: 22px; font-weight: normal; color: #444; letter-spacing: -.45px; background: linear-gradient(#fff, #f2f2f2); }
.status > span { flex: none; height: 38px; line-height: 42px; margin-right: 14px; border-right: 2px solid #e4e4e4; white-space: nowrap; }
.status .s-user { width: 136px; } .status .s-id { width: 66px; padding-left: 1px; letter-spacing: 0; } .status .s-build { width: 400px; padding-left: 1px; letter-spacing: -.27px; } .status .s-domain { width: 114px; padding-left: 1px; } .status .s-year { width: 66px; padding-left: 1px; letter-spacing: 0; }
.status .s-icons { width: 96px; display: flex; gap: 16px; align-items: center; }
.s-icons svg { width: 32px; height: 32px; }

/* confirmation dialog */
.dialog { position: absolute; left: 828px; top: 624px; width: 898px; height: 252px; display: flex; flex-direction: column; border: 2px solid #5e5e60; border-top-color: #35296a; border-bottom-width: 4px; background: #eae8e6; }
.dialog-title { height: 56px; flex: none; display: flex; border-bottom: 4px solid #2b1a60; background: linear-gradient(#a69cbc, #84799f 26px, #3a2e6e 26px, #261254); color: #fff; }
.dialog-title span { flex: 1; padding-left: 38px; text-align: center; font-size: 26px; line-height: 54px; letter-spacing: -.15px; }
.dialog-title button { width: 64px; margin-right: 18px; padding: 10px 16px; background: linear-gradient(#e4e1ea, #b7afc9 26px, #9389ae 26px, #6d5c94); }
.dialog-body { height: 96px; flex: none; display: flex; gap: 20px; padding: 22px 0 0 20px; border-bottom: 2px solid #d6d6d6; background: #fff; }
.dialog-body svg { width: 48px; height: 48px; margin-top: 4px; }
.dialog-body p { margin: 0; font-size: 22px; line-height: 30px; letter-spacing: .71px; white-space: nowrap; }
.dialog-footer { flex: 1; display: flex; gap: 40px; padding: 22px 0 0 146px; }
```
